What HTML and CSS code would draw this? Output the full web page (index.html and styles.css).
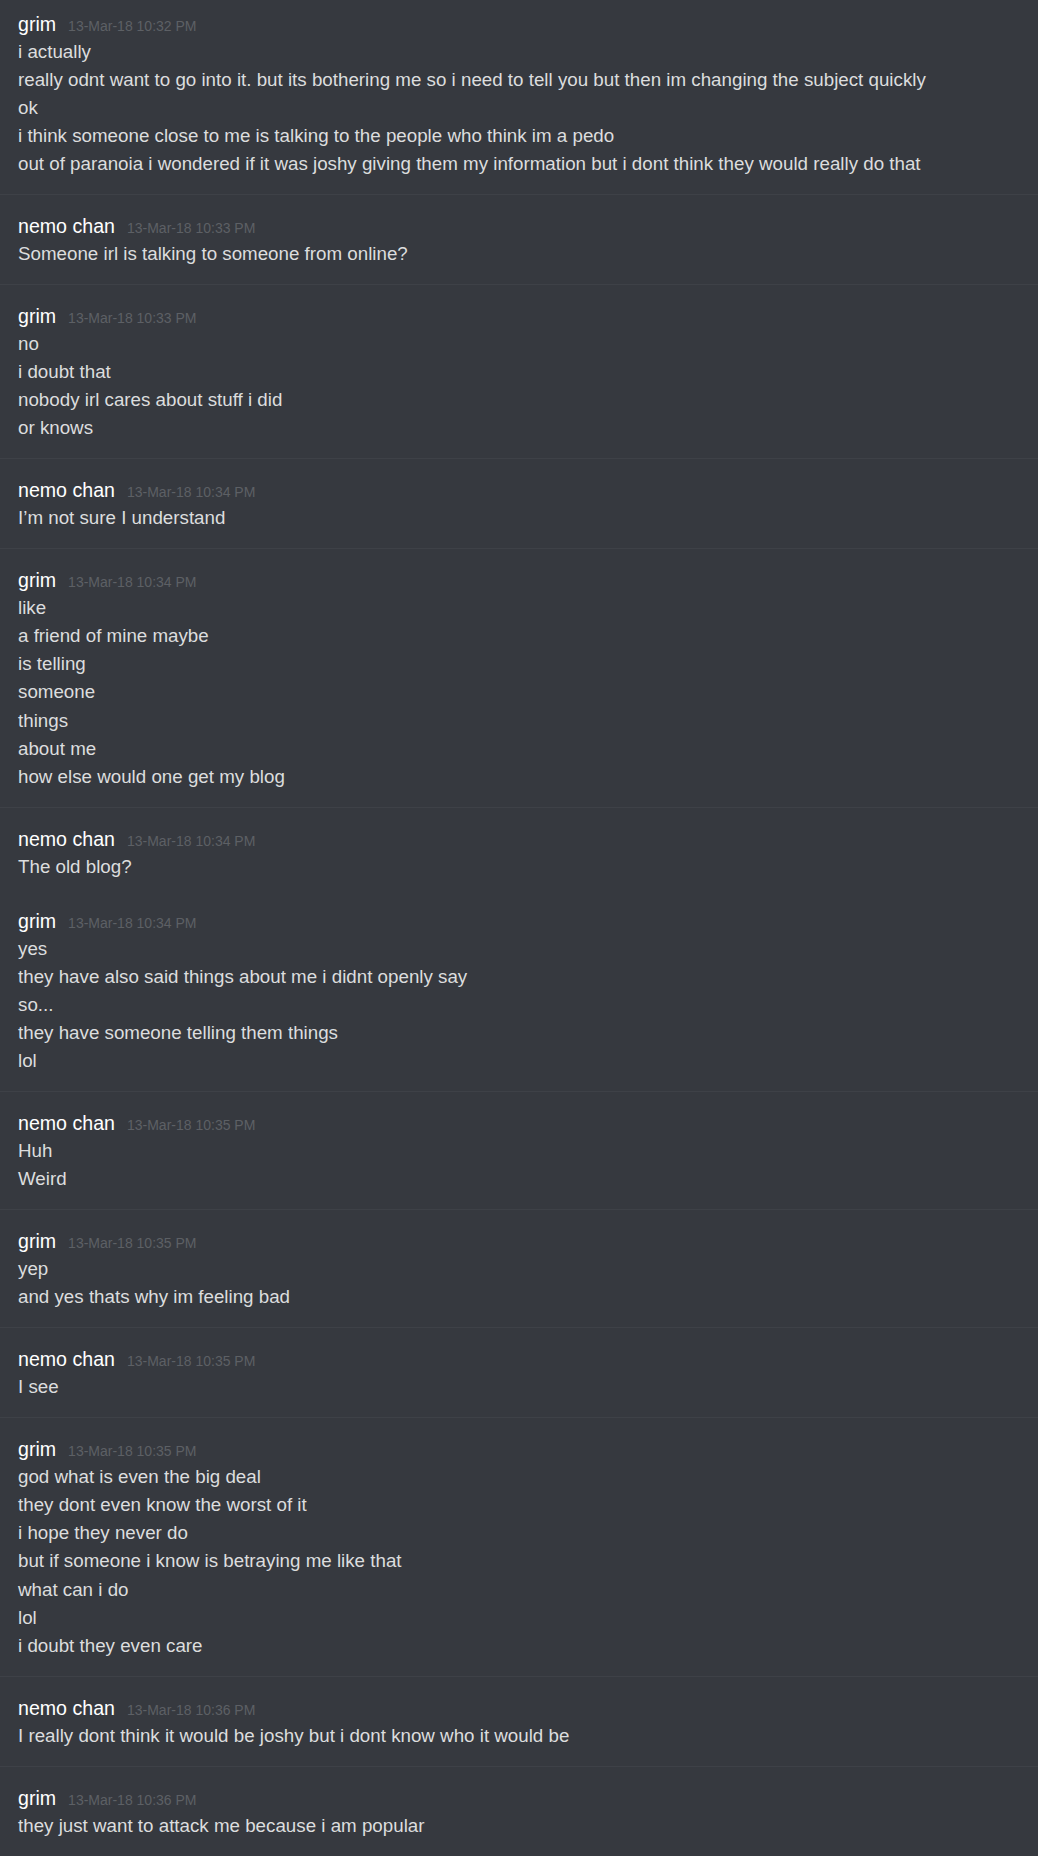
FILE: index.html
```html
<!DOCTYPE html>
<html>
<head>
<meta charset="utf-8">
<link rel="stylesheet" href="styles.css">
</head>
<body>
<div class="chat">
  <div class="group first">
    <div class="head"><span class="user">grim</span><span class="time">13-Mar-18 10:32 PM</span></div>
    <div class="line">i actually</div>
    <div class="line">really odnt want to go into it. but its bothering me so i need to tell you but then im changing the subject quickly</div>
    <div class="line">ok</div>
    <div class="line">i think someone close to me is talking to the people who think im a pedo</div>
    <div class="line">out of paranoia i wondered if it was joshy giving them my information but i dont think they would really do that</div>
  </div>
  <div class="group">
    <div class="head"><span class="user">nemo chan</span><span class="time">13-Mar-18 10:33 PM</span></div>
    <div class="line">Someone irl is talking to someone from online?</div>
  </div>
  <div class="group">
    <div class="head"><span class="user">grim</span><span class="time">13-Mar-18 10:33 PM</span></div>
    <div class="line">no</div>
    <div class="line">i doubt that</div>
    <div class="line">nobody irl cares about stuff i did</div>
    <div class="line">or knows</div>
  </div>
  <div class="group">
    <div class="head"><span class="user">nemo chan</span><span class="time">13-Mar-18 10:34 PM</span></div>
    <div class="line">I’m not sure I understand</div>
  </div>
  <div class="group">
    <div class="head"><span class="user">grim</span><span class="time">13-Mar-18 10:34 PM</span></div>
    <div class="line">like</div>
    <div class="line">a friend of mine maybe</div>
    <div class="line">is telling</div>
    <div class="line">someone</div>
    <div class="line">things</div>
    <div class="line">about me</div>
    <div class="line">how else would one get my blog</div>
  </div>
  <div class="group">
    <div class="head"><span class="user">nemo chan</span><span class="time">13-Mar-18 10:34 PM</span></div>
    <div class="line">The old blog?</div>
  </div>
  <div class="group joined">
    <div class="head"><span class="user">grim</span><span class="time">13-Mar-18 10:34 PM</span></div>
    <div class="line">yes</div>
    <div class="line">they have also said things about me i didnt openly say</div>
    <div class="line">so...</div>
    <div class="line">they have someone telling them things</div>
    <div class="line">lol</div>
  </div>
  <div class="group">
    <div class="head"><span class="user">nemo chan</span><span class="time">13-Mar-18 10:35 PM</span></div>
    <div class="line">Huh</div>
    <div class="line">Weird</div>
  </div>
  <div class="group">
    <div class="head"><span class="user">grim</span><span class="time">13-Mar-18 10:35 PM</span></div>
    <div class="line">yep</div>
    <div class="line">and yes thats why im feeling bad</div>
  </div>
  <div class="group">
    <div class="head"><span class="user">nemo chan</span><span class="time">13-Mar-18 10:35 PM</span></div>
    <div class="line">I see</div>
  </div>
  <div class="group">
    <div class="head"><span class="user">grim</span><span class="time">13-Mar-18 10:35 PM</span></div>
    <div class="line">god what is even the big deal</div>
    <div class="line">they dont even know the worst of it</div>
    <div class="line">i hope they never do</div>
    <div class="line">but if someone i know is betraying me like that</div>
    <div class="line">what can i do</div>
    <div class="line">lol</div>
    <div class="line">i doubt they even care</div>
  </div>
  <div class="group">
    <div class="head"><span class="user">nemo chan</span><span class="time">13-Mar-18 10:36 PM</span></div>
    <div class="line">I really dont think it would be joshy but i dont know who it would be</div>
  </div>
  <div class="group">
    <div class="head"><span class="user">grim</span><span class="time">13-Mar-18 10:36 PM</span></div>
    <div class="line">they just want to attack me because i am popular</div>
  </div>
</div>
</body>
</html>
```
FILE: styles.css
```css
html, body {
  margin: 0;
  padding: 0;
  background: #36393f;
}
body {
  font-family: "Liberation Sans", Arial, sans-serif;
  color: #dcddde;
  height: 1856px;
  overflow: hidden;
}
.chat {
  display: flex;
  flex-direction: column;
}
.group {
  border-top: 1px solid #3e4147;
  padding: 18px 18px 15.8px 18px;
}
.group.first {
  border-top: none;
  padding-top: 10.5px;
}
.group.joined {
  border-top: none;
  padding-top: 11px;
}
.head {
  display: flex;
  align-items: baseline;
  height: 27px;
  line-height: 27px;
}
.user {
  color: #ffffff;
  font-size: 19.6px;
}
.time {
  color: #5d6065;
  font-size: 14px;
  margin-left: 12px;
}
.line {
  font-size: 18.75px;
  line-height: 28.125px;
  white-space: nowrap;
}
```
